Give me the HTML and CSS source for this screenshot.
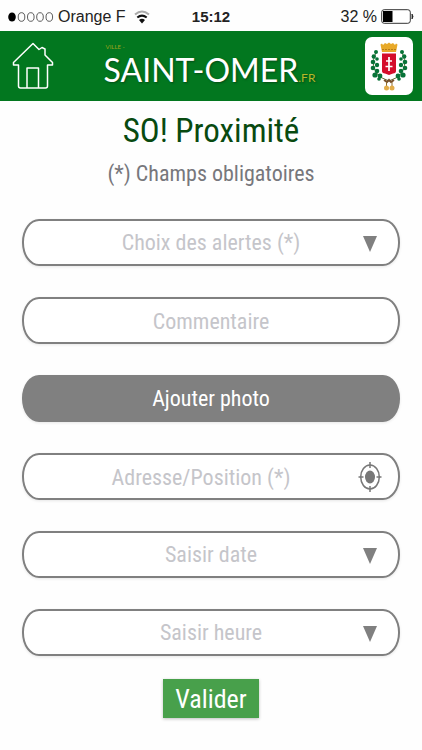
FILE: index.html
```html
<!DOCTYPE html>
<html lang="fr">
<head>
<meta charset="utf-8">
<meta name="viewport" content="width=device-width, initial-scale=1">
<title>SO! Proximité</title>
<link rel="stylesheet" href="styles.css">
</head>
<body>
<div class="status">
  <div class="status-side">
    <svg class="signal" viewBox="0 0 46 10" aria-hidden="true">
      <ellipse cx="4" cy="5" rx="3.8" ry="4.6" fill="#000"/>
      <g fill="none" stroke="#333" stroke-width=".8"><ellipse cx="13.500" cy="5" rx="3.300" ry="4.300"/><ellipse cx="22.800" cy="5" rx="3.300" ry="4.300"/><ellipse cx="32" cy="5" rx="3.300" ry="4.300"/><ellipse cx="41.300" cy="5" rx="3.300" ry="4.300"/></g>
    </svg>
    <span>Orange F</span>
    <svg class="wifi" viewBox="0 0 16 14" aria-hidden="true">
      <g fill="none" stroke-width="2"><path d="M1 4.500Q8-1.500 15 4.500" stroke="#aaa"/><path d="M3.300 7.600Q8 3.600 12.700 7.600" stroke="#111"/></g>
      <path d="M5 10Q8 7.500 11 10L8 13.600Z" fill="#111"/>
    </svg>
  </div>
  <strong class="clock">15:12</strong>
  <div class="status-side status-end">
    <span>32 %</span>
    <svg class="battery" viewBox="0 0 33 15" aria-hidden="true">
      <rect x=".7" y=".7" width="28.600" height="13.600" rx="2.500" fill="#fff" stroke="#333" stroke-width="1"/>
      <rect x="2" y="2" width="9.500" height="11" fill="#000"/>
      <path d="M31 5Q33 7.500 31 10Z" fill="#222" stroke="#222" stroke-width=".8"/>
    </svg>
  </div>
</div>
<header class="bar">
  <a class="home" href="#" aria-label="Accueil">
    <svg viewBox="0 0 42 48" fill="none" stroke="#fff" stroke-width="1.500" stroke-linejoin="round" aria-hidden="true">
      <path d="M21 1.500L1.500 20.500V23H6.500V44Q6.500 46 8.500 46H33.500Q35.500 46 35.500 44V23H40.500V20.500L33 13V7L30 5.500L27 7.500Z"/>
      <path d="M15 46V26H26.500V46"/>
    </svg>
  </a>
  <div class="brand">
    <span class="brand-top">VILLE -</span>
    <div class="brand-row"><span class="brand-name">SAINT-OMER</span><span class="brand-tld">.FR</span></div>
  </div>
  <svg class="crest" viewBox="0 0 48 58" role="img" aria-label="Blason de Saint-Omer">
    <rect width="48" height="58" rx="7" fill="#fff"/>
    <path d="M15.500 7.500L17 6.500L18 8L20 6L22 7L24 5.500L26 7L28 6L30 8L31 6.500L32.500 7.500L31 15H17Z" fill="#e8a928"/>
    <path d="M17 12.500H31" stroke="#b87c18" stroke-width="1" stroke-dasharray="2 1"/>
    <path d="M17 16.500H31V34Q31 36 28 36.500L24 38L20 36.500Q17 36 17 34Z" fill="#d40d2b"/>
    <path d="M24 20V34M21 24H27M20.500 29.500H27.500" stroke="#fff" stroke-width="1.700"/>
    <path d="M11 15Q4 30 15 40L24 44L33 40Q44 30 37 15" fill="none" stroke="#5b7034" stroke-width="1"/>
    <g fill="#087338">
      <circle cx="11" cy="15" r="2"/><circle cx="8.800" cy="19.500" r="2.200"/><circle cx="12" cy="22" r="1.800"/><circle cx="8" cy="25" r="2.300"/><circle cx="12" cy="28" r="2.200"/><circle cx="8" cy="31" r="2.300"/><circle cx="12" cy="34" r="2.300"/><circle cx="10" cy="38" r="2.600"/><circle cx="15" cy="39" r="2.400"/><circle cx="14" cy="42" r="1.800"/>
      <circle cx="37" cy="15" r="2"/><circle cx="39.200" cy="19.500" r="2.200"/><circle cx="36" cy="22" r="1.800"/><circle cx="40" cy="25" r="2.300"/><circle cx="36" cy="28" r="2.200"/><circle cx="40" cy="31" r="2.300"/><circle cx="36" cy="34" r="2.300"/><circle cx="38" cy="38" r="2.600"/><circle cx="33" cy="39" r="2.400"/><circle cx="34" cy="42" r="1.800"/>
    </g>
    <path d="M19 43L22 45L24 43L26 45L29 43" fill="none" stroke="#77502c" stroke-width="2"/>
    <path d="M21.500 45V49M27 45V49" stroke="#8d6b2c" stroke-width="1"/>
    <g fill="#e2ad4a"><circle cx="21.500" cy="51" r="2.500"/><circle cx="27" cy="51" r="2.500"/></g>
  </svg>
</header>
<main class="page">
  <h1 class="title">SO! Proximité</h1>
  <p class="note">(*) Champs obligatoires</p>
  <form class="form">
    <div class="field">
      <select class="control" aria-label="Choix des alertes"><option>Choix des alertes (*)</option></select>
      <svg class="arrow" viewBox="0 0 14 16" aria-hidden="true"><path d="M0 0H14L7 16Z"/></svg>
    </div>
    <div class="field">
      <input class="control" type="text" placeholder="Commentaire" aria-label="Commentaire">
    </div>
    <button class="control photo" type="button">Ajouter photo</button>
    <div class="field">
      <input class="control with-locate" type="text" placeholder="Adresse/Position (*)" aria-label="Adresse ou position">
      <button class="locate" type="button" aria-label="Me localiser">
        <svg viewBox="0 0 24 32" aria-hidden="true"><g fill="none" stroke="#777" stroke-width="1.500"><ellipse cx="12" cy="16" rx="9.300" ry="12"/><path d="M12 1V7M12 25V31M.500 16H5.500M18.500 16H23.500"/></g><ellipse cx="12" cy="16" rx="5" ry="6.500" fill="#777"/></svg>
      </button>
    </div>
    <div class="field">
      <select class="control" aria-label="Date"><option>Saisir date</option></select>
      <svg class="arrow" viewBox="0 0 14 16" aria-hidden="true"><path d="M0 0H14L7 16Z"/></svg>
    </div>
    <div class="field">
      <select class="control" aria-label="Heure"><option>Saisir heure</option></select>
      <svg class="arrow" viewBox="0 0 14 16" aria-hidden="true"><path d="M0 0H14L7 16Z"/></svg>
    </div>
    <button class="submit" type="submit">Valider</button>
  </form>
</main>
</body>
</html>
```
FILE: styles.css
```css
* { box-sizing: border-box; }
body {
  margin: 0;
  background: #fefefe;
  font-family: "Roboto Condensed", Roboto, sans-serif;
}
button, input, select { font-family: inherit; margin: 0; }
svg { display: block; }

.status {
  display: flex;
  align-items: center;
  height: 31px;
  padding: 2px 8px 0;
  font: 16px/20px "Liberation Sans", sans-serif;
  color: #222;
}
.status-side { display: flex; flex: 1; align-items: center; gap: 4px; white-space: nowrap; }
.status-end { justify-content: flex-end; }
.signal { width: 46px; height: 10px; }
.wifi { width: 16px; height: 14px; margin-left: 4px; }
.clock { font-size: 15px; }
.battery { width: 33px; height: 15px; }

.bar {
  display: flex;
  align-items: center;
  justify-content: space-between;
  height: 70px;
  padding: 0 9px 0 12px;
  background: #02771f;
}
.home { width: 42px; height: 48px; }
.brand {
  display: flex;
  flex-direction: column;
  font-family: Lato, sans-serif;
  color: #fff;
}
.brand-row { display: flex; align-items: baseline; text-shadow: 1px 1px 2px #044d16; }
.brand-name { font-size: 32px; line-height: 38px; }
.brand-top { padding-left: 2px; font-size: 6px; line-height: 8px; color: #9da31c; }
.brand-tld { font-size: 12px; color: #b5b828; }
.crest { width: 48px; height: 58px; }

.page { padding: 8px 22px 32px; text-align: center; }
.title { margin: 0; font-size: 33px; line-height: 44px; font-weight: 400; color: #084a10; }
.note { margin: 4px 0 0; font-size: 22px; line-height: 34px; color: #77777c; }

.form { display: flex; flex-direction: column; gap: 31px; margin-top: 28px; }
.field { position: relative; }
.control {
  display: block;
  width: 100%;
  height: 47px;
  padding: 1px 32px 0;
  border: 2px solid #808080;
  border-radius: 17px / 23px;
  background: #fff;
  color: #c5c5ca;
  font-size: 22px;
  line-height: 32px;
  font-weight: 400;
  text-align: center;
  text-align-last: center;
  appearance: none;
  box-shadow: 0 1px 3px #00000018;
}
.control::placeholder { color: #c5c5ca; opacity: 1; }
.with-locate { padding-right: 52px; }
.photo { background: #808080; color: #fff; }
.arrow {
  position: absolute;
  top: 17px;
  right: 23px;
  width: 14px;
  height: 16px;
  fill: #808080;
  pointer-events: none;
}
.locate { position: absolute; top: 8px; right: 18px; width: 24px; height: 32px; padding: 0; border: 0; background: none; }
.submit {
  align-self: center;
  height: 39px;
  margin-top: -8px;
  padding: 0 12px;
  border: 0;
  background: #48a04b;
  color: #fff;
  font-size: 26px;
  line-height: 36px;
  box-shadow: 0 1px 3px #00000040;
}
```
